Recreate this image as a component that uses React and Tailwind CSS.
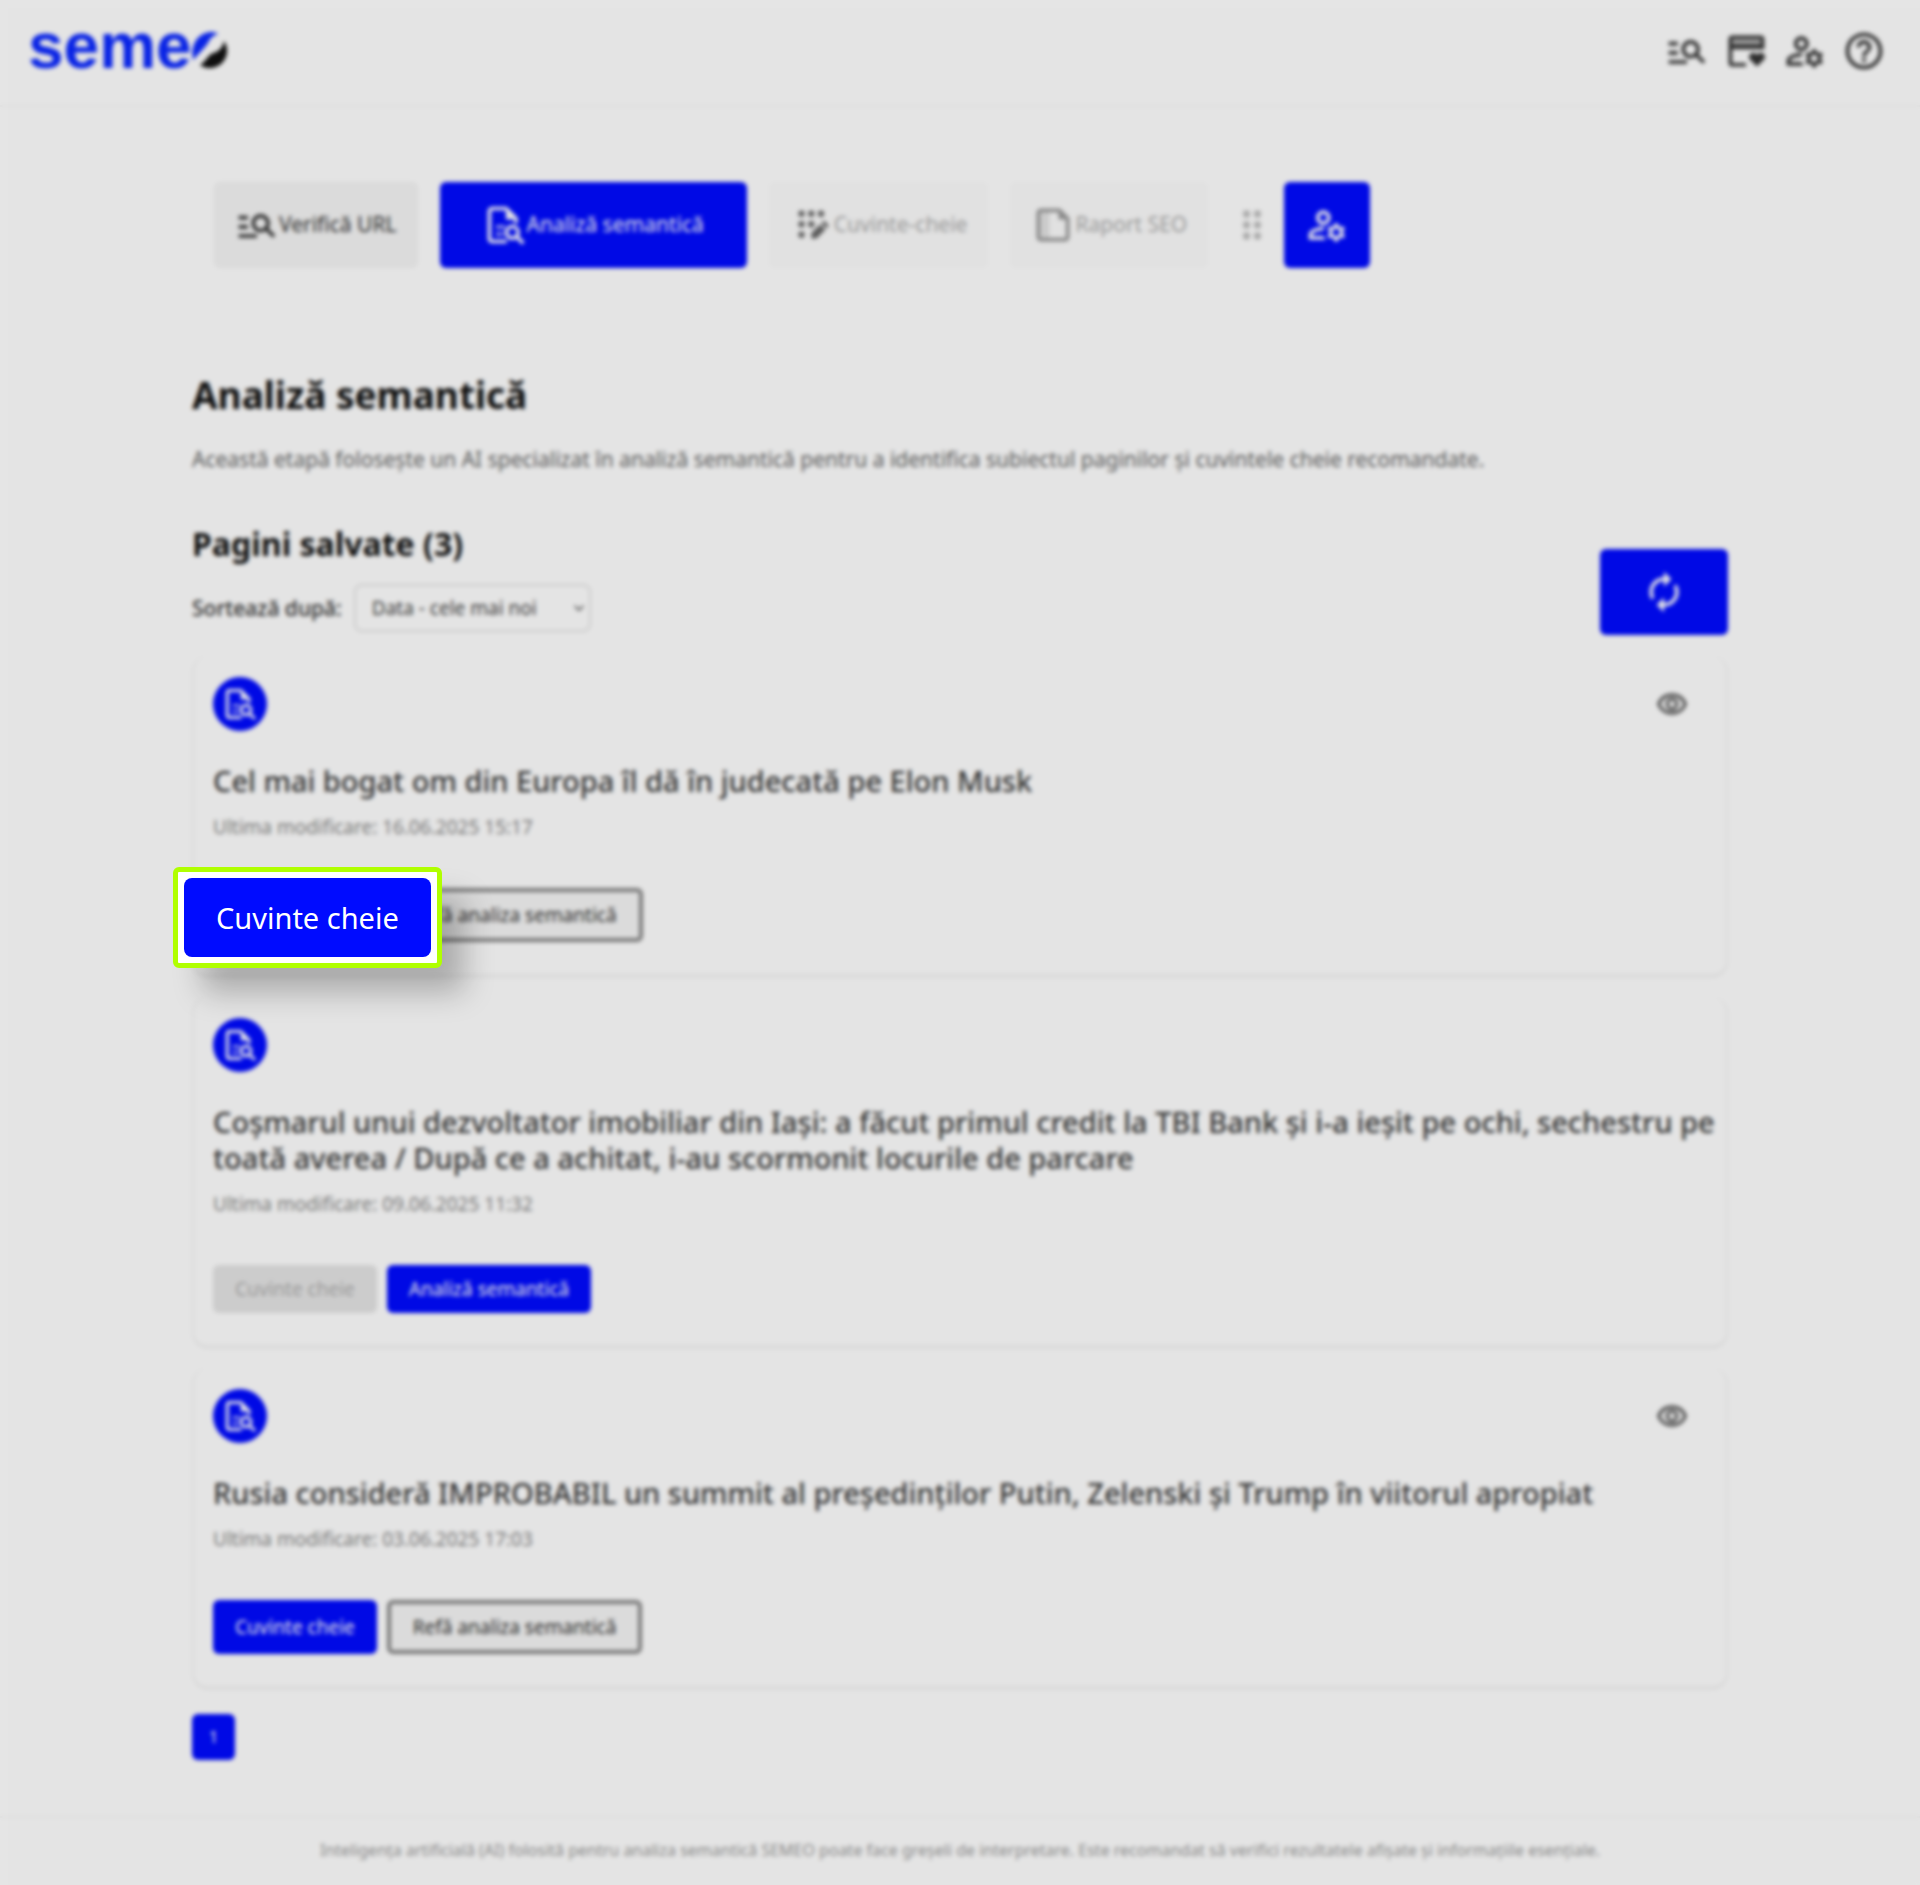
import {
  MdAutorenew,
  MdDragIndicator,
  MdHelpOutline,
  MdKeyboardArrowDown,
  MdManageSearch,
  MdOutlineManageAccounts,
} from "react-icons/md";

const PAGES = [
  {
    id: 1,
    title: "Cel mai bogat om din Europa îl dă în judecată pe Elon Musk",
    date: "16.06.2025 15:17",
    analyzed: true,
    highlighted: true,
  },
  {
    id: 2,
    title:
      "Coșmarul unui dezvoltator imobiliar din Iași: a făcut primul credit la TBI Bank și i-a ieșit pe ochi, sechestru pe toată averea / După ce a achitat, i-au scormonit locurile de parcare",
    date: "09.06.2025 11:32",
    analyzed: false,
  },
  {
    id: 3,
    title: "Rusia consideră IMPROBABIL un summit al președinților Putin, Zelenski și Trump în viitorul apropiat",
    date: "03.06.2025 17:03",
    analyzed: true,
  },
];

const DocSearchIcon = ({ className }) => (
  <svg viewBox="0 0 24 24" fill="none" stroke="currentColor" strokeWidth="2" className={className} aria-hidden="true">
    <path d="M13 21H5a1.500 1.500 0 0 1-1.500-1.500v-15A1.500 1.500 0 0 1 5 3h7.500L18 8.500V11" />
    <path d="M12.500 2.500v6.500H19z" fill="currentColor" stroke="none" />
    <path d="M7.500 13h1.500M10 13h1.500M7.500 17h1.500M10 17h1" />
    <circle cx="16" cy="16" r="3.200" />
    <path d="M18.300 18.300L22 22" />
  </svg>
);

const GridEditIcon = ({ className }) => (
  <svg viewBox="0 0 24 24" fill="currentColor" className={className} aria-hidden="true">
    <circle cx="5" cy="4.500" r="2.100" />
    <circle cx="11.500" cy="4.500" r="2.100" />
    <circle cx="18" cy="4.500" r="2.100" />
    <circle cx="5" cy="11.500" r="2.100" />
    <circle cx="11.500" cy="11.500" r="2.100" />
    <circle cx="5" cy="18.500" r="2.100" />
    <path d="M11.500 21v-3.500l6-6 3.500 3.500-6 6zM18.300 10.700l1-1a1 1 0 0 1 1.400 0l2 2a1 1 0 0 1 0 1.400l-1 1z" />
  </svg>
);

const ReportIcon = ({ className }) => (
  <svg viewBox="0 0 24 24" className={className} aria-hidden="true">
    <path d="M5 4h5v16H5z" fill="currentColor" opacity="0.25" />
    <path
      d="M15.500 4H5.500A1.500 1.500 0 0 0 4 5.500v13A1.500 1.500 0 0 0 5.500 20h13a1.500 1.500 0 0 0 1.500-1.500V8.500z"
      fill="none"
      stroke="currentColor"
      strokeWidth="2"
    />
    <path d="M15 4v5h5.500z" fill="currentColor" />
  </svg>
);

const CardHeartIcon = ({ className }) => (
  <svg viewBox="0 0 24 24" className={className} aria-hidden="true">
    <path
      d="M12 19.500H4.500a1 1 0 0 1-1-1v-13a1 1 0 0 1 1-1h15.500a1 1 0 0 1 1 1V11"
      fill="none"
      stroke="currentColor"
      strokeWidth="2"
    />
    <path d="M3.500 5H21v4H3.500z" fill="currentColor" opacity="0.4" />
    <path d="M3.500 8.500H21v2.500H3.500z" fill="currentColor" />
    <path d="M18 20.500l-4-4a2.200 2.200 0 0 1 4-2.500 2.200 2.200 0 0 1 4 2.500z" fill="currentColor" />
  </svg>
);

const EyeIcon = ({ className }) => (
  <svg viewBox="0 0 24 24" fill="none" stroke="currentColor" className={className} aria-hidden="true">
    <path
      d="M2 12c1.800-4.300 5.500-6.800 10-6.800S20.200 7.700 22 12c-1.800 4.300-5.500 6.800-10 6.800S3.800 16.300 2 12z"
      strokeWidth="2.400"
    />
    <circle cx="12" cy="12" r="3.600" strokeWidth="2.200" />
  </svg>
);

const Logo = () => (
  <a href="#" aria-label="semeo" className="flex items-center pb-2.5 text-[#0a28ff]">
    <span className="font-['Liberation_Sans',sans-serif] text-[64px] leading-[64px] font-bold">seme</span>
    <svg viewBox="0 0 36 38" className="mt-2 h-[38px] w-9" aria-hidden="true">
      <path d="M1 29C-2 14 6 1 20 1c3 0 5 1 6 2-4 1-7 3-9 7C14 16 8 21 1 29z" fill="currentColor" />
      <path d="M8 34c5-3 6-7 11-11 3-2 5-1 8-4 3-3 4-5 5-9 4 6 4 12 1 18-5 9-17 12-25 6z" fill="#111" />
    </svg>
  </a>
);

const Header = () => (
  <header className="flex h-[107px] items-center justify-between border-b-2 border-[#f8f8f8] pt-2 pr-5 pb-3 pl-7">
    <Logo />
    <nav className="flex items-center gap-[15px] pr-3.5 text-[#333]">
      <a href="#" aria-label="Verifică URL">
        <MdManageSearch className="size-11" />
      </a>
      <a href="#" aria-label="Abonament">
        <CardHeartIcon className="size-11" />
      </a>
      <a href="#" aria-label="Cont">
        <MdOutlineManageAccounts className="size-11" />
      </a>
      <a href="#" aria-label="Ajutor">
        <MdHelpOutline className="size-11" />
      </a>
    </nav>
  </header>
);

const Steps = () => (
  <nav className="flex h-[86px] items-stretch gap-[22px] pl-[22px] text-[21px]">
    <button type="button" className="flex items-center rounded-md bg-[#f4f4f4] px-[21px] text-[#333]">
      <MdManageSearch className="size-11" />
      Verifică URL
    </button>
    <button type="button" className="flex items-center rounded-md bg-[#000bff] px-[43px] text-white">
      <DocSearchIcon className="size-11" />
      Analiză semantică
    </button>
    <button type="button" disabled className="flex items-center rounded-md bg-[#fbfbfb] px-[21px] text-[#aaa]">
      <GridEditIcon className="size-11 p-1 text-[#666]" />
      Cuvinte-cheie
    </button>
    <button type="button" disabled className="flex items-center rounded-md bg-[#fbfbfb] px-[21px] text-[#aaa]">
      <ReportIcon className="size-11 text-[#999]" />
      Raport SEO
    </button>
    <div className="flex items-center gap-2.5">
      <MdDragIndicator className="size-11 text-[#bbb]" />
      <button
        type="button"
        aria-label="Setări cont"
        className="flex size-[86px] items-center justify-center rounded-md bg-[#000bff] text-white"
      >
        <MdOutlineManageAccounts className="size-11" />
      </button>
    </div>
  </nav>
);

const HighlightedAction = () => (
  <div className="relative h-[54px] w-[164px]">
    <div className="absolute -top-[21px] -left-10 z-20 rounded-md border-[5px] border-[#b0ff00] bg-white p-1.5 shadow-[26px_28px_30px_-4px_rgba(0,0,0,0.25)]">
      <button
        type="button"
        className="rounded-lg bg-[#000bff] px-8 py-5 text-[29px] leading-[39px] whitespace-nowrap text-white"
      >
        Cuvinte cheie
      </button>
    </div>
  </div>
);

const PageCard = ({ page }) => (
  <article className="rounded-2xl border-x-2 border-b-4 border-[#f4f4f4] pt-[21px] pr-1.5 pb-8 pl-[19px]">
    <div className="flex items-center justify-between pr-8">
      <span className="flex size-[54px] items-center justify-center rounded-full bg-[#000bff] text-white">
        <DocSearchIcon className="size-9" />
      </span>
      {page.analyzed && (
        <button type="button" aria-label="Vezi pagina" className="text-[#555]">
          <EyeIcon className="size-8" />
        </button>
      )}
    </div>
    <h3 className="mt-8 text-[29px] leading-9 font-medium text-[#3a3a3a]">{page.title}</h3>
    <p className="mt-[15px] text-[19px] leading-[27px] text-[#888]">Ultima modificare: {page.date}</p>
    <div className="mt-[47px] flex items-stretch gap-2.5 text-[19px] leading-[26px]">
      {page.highlighted ? (
        <HighlightedAction />
      ) : (
        <button
          type="button"
          disabled={!page.analyzed}
          className="rounded-md bg-[#000bff] px-[22px] py-[11px] text-white disabled:bg-[#e4e4e4] disabled:text-[#aaa]"
        >
          Cuvinte cheie
        </button>
      )}
      {page.analyzed ? (
        <button
          type="button"
          className="rounded-md border-4 border-[#888] bg-[#f4f4f4] px-[22px] py-2.5 text-[#333]"
        >
          Refă analiza semantică
        </button>
      ) : (
        <button type="button" className="rounded-md bg-[#000bff] px-[22px] py-[11px] text-white">
          Analiză semantică
        </button>
      )}
    </div>
  </article>
);

export default function App() {
  return (
    <div className="relative min-h-screen bg-[#fefefe] font-['Noto_Sans',sans-serif] shadow-[inset_8px_8px_0_#fff]">
      <Header />
      <main className="mx-auto w-4/5 pt-[75px]">
        <Steps />
        <h1 className="mt-[103px] text-[37px] leading-[48px] font-bold text-[#111]">Analiză semantică</h1>
        <p className="mt-6 text-[21px] leading-8 text-[#666]">
          Această etapă folosește un AI specializat în analiză semantică pentru a identifica subiectul paginilor și
          cuvintele cheie recomandate.
        </p>
        <div className="mt-12 flex items-end justify-between">
          <div className="pb-[3px]">
            <h2 className="text-[32px] leading-[42px] font-bold text-[#111]">Pagini salvate (3)</h2>
            <div className="mt-[19px] flex items-center gap-3">
              <label htmlFor="sort" className="text-[21px] leading-8 font-medium text-[#333]">
                Sortează după:
              </label>
              <div className="relative">
                <select
                  id="sort"
                  className="h-12 appearance-none rounded-lg border-2 border-[#e4e4e4] bg-transparent pr-[34px] pl-4 text-[19px] text-[#444]"
                >
                  <option>Data - cele mai noi</option>
                  <option>Data - cele mai vechi</option>
                </select>
                <MdKeyboardArrowDown className="pointer-events-none absolute top-3.5 right-0.5 size-5 text-[#555]" />
              </div>
            </div>
          </div>
          <button
            type="button"
            aria-label="Reîncarcă"
            className="flex h-[86px] w-32 items-center justify-center rounded-md bg-[#000bff] text-white"
          >
            <MdAutorenew className="size-11" />
          </button>
        </div>
        <div className="mt-[21px] flex flex-col gap-[19px]">
          {PAGES.map((page) => (
            <PageCard key={page.id} page={page} />
          ))}
        </div>
        <button type="button" className="mt-6 h-[46px] w-[43px] rounded-md bg-[#000bff] text-[16px] text-white">
          1
        </button>
      </main>
      <footer className="mt-14 border-t-2 border-[#f8f8f8] py-5 text-center text-[16px] leading-6 text-[#999]">
        Inteligența artificială (AI) folosită pentru analiza semantică SEMEO poate face greșeli de interpretare. Este
        recomandat să verifici rezultatele afișate și informațiile esențiale.
      </footer>
      {/* Dimmed backdrop behind the highlighted action */}
      <div className="pointer-events-none absolute inset-0 z-10 bg-black/10 backdrop-blur-[2px]" />
    </div>
  );
}
